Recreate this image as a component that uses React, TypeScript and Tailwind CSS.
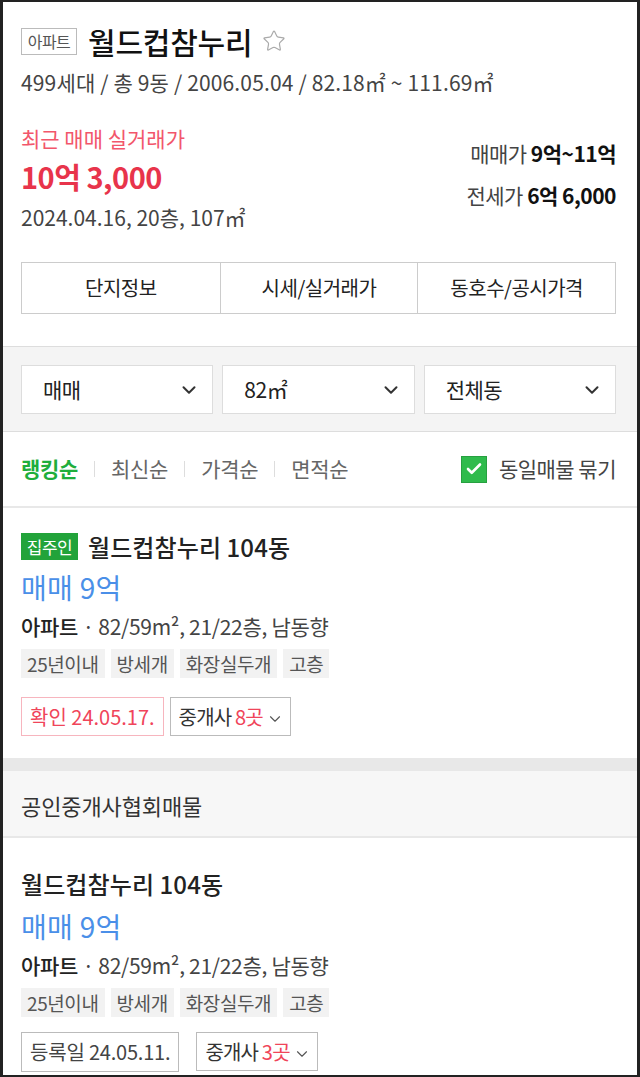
import { ChevronDown, Check, Star } from "lucide-react";

const FONT = "font-['Noto_Sans_CJK_KR','Noto_Sans',sans-serif]";

const tags = ["25년이내", "방세개", "화장실두개", "고층"];

function Tags() {
  return (
    <div className="flex gap-[6px]">
      {tags.map((t) => (
        <span
          key={t}
          className="flex h-[29px] items-center bg-[#f2f2f2] px-[6px] text-[19px] leading-none tracking-[-0.4px] text-[#555]"
        >
          {t}
        </span>
      ))}
    </div>
  );
}

function BrokerButton({ count }: { count: number }) {
  return (
    <div className="flex h-[39px] items-center gap-[3px] border border-[#bbb] bg-white pl-[8px] pr-[6px] text-[20px] leading-none tracking-[-0.8px] text-[#333]">
      <span>
        중개사 <span className="text-[#f0455a]">{count}곳</span>
      </span>
      <ChevronDown className="mt-[5px] h-[18px] w-[18px] text-[#555]" strokeWidth={1.5} />
    </div>
  );
}

function ListingBody() {
  return (
    <>
      <div className="mt-[11px] h-[32px] text-[28px] leading-[32px] tracking-[0.3px] text-[#4a8fe8]">매매 9억</div>
      <div className="mt-[10px] h-[26px] text-[21px] leading-[26px] tracking-[-0.3px] text-[#444]">
        <span className="font-medium text-[#222]">아파트</span> · 82/59m², 21/22층, 남동향
      </div>
      <div className="mt-[10px]">
        <Tags />
      </div>
    </>
  );
}

export default function App() {
  return (
    <div className={`${FONT} h-[1077px] w-[640px] overflow-hidden border-x-[3px] border-y-[2px] border-[#222] bg-white`}>
      {/* header */}
      <div className="pl-[18px] pr-[21px] pt-[23px]">
        <div className="flex h-[32px] items-center">
          <span className="flex h-[27px] w-[56px] items-center justify-center border border-[#bbb] text-[16px] leading-none tracking-[-0.5px] text-[#555]">
            아파트
          </span>
          <span className="ml-[11px] text-[30px] font-medium leading-none tracking-[-0.2px] text-[#111]">월드컵참누리</span>
          <Star className="ml-[10px] h-[24px] w-[24px] text-[#aaa]" strokeWidth={1.2} />
        </div>
        <div className="mt-[13px] h-[24px] text-[21px] leading-[24px] tracking-[0.15px] text-[#444]">
          499세대 / 총 9동 / 2006.05.04 / 82.18㎡ ~ 111.69㎡
        </div>

        <div className="mt-[32px] flex justify-between">
          <div>
            <div className="h-[24px] text-[21px] leading-[24px] tracking-[0px] text-[#f2566b]">최근 매매 실거래가</div>
            <div className="mt-[9px] h-[34px] text-[29px] font-bold leading-[34px] tracking-[-0.5px] text-[#e8344b]">
              10억 3,000
            </div>
            <div className="mt-[12px] h-[24px] text-[21px] leading-[24px] tracking-[0px] text-[#444]">
              2024.04.16, 20층, 107㎡
            </div>
          </div>
          <div className="flex flex-col items-end gap-[18px] pt-[15px] text-[21px] leading-[24px] tracking-[-0.5px]">
            <div className="text-[#444]">
              매매가 <span className="font-bold text-[#111]">9억~11억</span>
            </div>
            <div className="text-[#444]">
              전세가 <span className="font-bold text-[#111]">6억 6,000</span>
            </div>
          </div>
        </div>

        <div className="mt-[33px] grid h-[52px] grid-cols-3 border border-[#ccc] text-[20px] tracking-[-0.5px] text-[#222]">
          <div className="flex items-center justify-center">단지정보</div>
          <div className="flex items-center justify-center border-l border-[#ccc]">시세/실거래가</div>
          <div className="flex items-center justify-center border-l border-[#ccc]">동호수/공시가격</div>
        </div>
      </div>

      {/* filters */}
      <div className="mt-[32px] border-y border-[#ddd] bg-[#f4f4f4] pb-[17px] pl-[18px] pr-[21px] pt-[18px]">
        <div className="grid grid-cols-3 gap-[9px]">
          {["매매", "82㎡", "전체동"].map((label) => (
            <div
              key={label}
              className="flex h-[49px] items-center justify-between border border-[#ddd] bg-white pl-[21px] pr-[12px] text-[21px] tracking-[-0.5px] text-[#222]"
            >
              <span>{label}</span>
              <ChevronDown className="h-[22px] w-[22px] text-[#333]" strokeWidth={2.2} />
            </div>
          ))}
        </div>
      </div>

      {/* sort */}
      <div className="flex h-[76px] items-center justify-between border-b-2 border-[#e8e8e8] pl-[18px] pr-[21px] text-[21px] tracking-[-0.3px]">
        <div className="flex items-center text-[#666]">
          <span className="font-bold text-[#1fae3c]">랭킹순</span>
          <span className="mx-[16px] h-[16px] w-px bg-[#ddd]" />
          <span>최신순</span>
          <span className="mx-[16px] h-[16px] w-px bg-[#ddd]" />
          <span>가격순</span>
          <span className="mx-[16px] h-[16px] w-px bg-[#ddd]" />
          <span>면적순</span>
        </div>
        <div className="flex items-center gap-[12px] tracking-[-0.5px] text-[#444]">
          <span className="flex h-[27px] w-[26px] items-center justify-center border border-[#27a040] bg-[#2fbb4c]">
            <Check className="h-[18px] w-[18px] text-white" strokeWidth={3.5} />
          </span>
          <span>동일매물 묶기</span>
        </div>
      </div>

      {/* listing 1 */}
      <div className="pb-[22px] pl-[18px] pr-[21px] pt-[25px]">
        <div className="flex h-[27px] items-center">
          <span className="flex h-[27px] w-[57px] items-center justify-center bg-[#22a33a] text-[17px] leading-none tracking-[-0.5px] text-white">
            집주인
          </span>
          <span className="ml-[10px] text-[24px] font-medium leading-none tracking-[0.1px] text-[#222]">월드컵참누리 104동</span>
        </div>
        <ListingBody />
        <div className="mt-[19px] flex gap-[6px]">
          <div className="flex h-[39px] items-center border border-[#f7b5be] px-[8px] text-[20px] leading-none tracking-[0px] text-[#f0455a]">
            확인 24.05.17.
          </div>
          <BrokerButton count={8} />
        </div>
      </div>

      <div className="h-[13px] bg-[#e8e8e8]" />
      <div className="flex h-[67px] items-center border-b-2 border-[#e8e8e8] bg-[#f7f7f7] pl-[18px] pt-[4px] text-[22px] tracking-[-0.1px] text-[#333]">
        공인중개사협회매물
      </div>

      {/* listing 2 */}
      <div className="pl-[18px] pr-[21px] pt-[31px]">
        <div className="h-[30px] text-[24px] font-medium leading-[30px] tracking-[0.1px] text-[#222]">월드컵참누리 104동</div>
        <ListingBody />
        <div className="mt-[15px] flex gap-[17px]">
          <div className="flex h-[40px] items-center border border-[#bbb] px-[8px] text-[20px] leading-none tracking-[-0.2px] text-[#444]">
            등록일 24.05.11.
          </div>
          <BrokerButton count={3} />
        </div>
      </div>
    </div>
  );
}
